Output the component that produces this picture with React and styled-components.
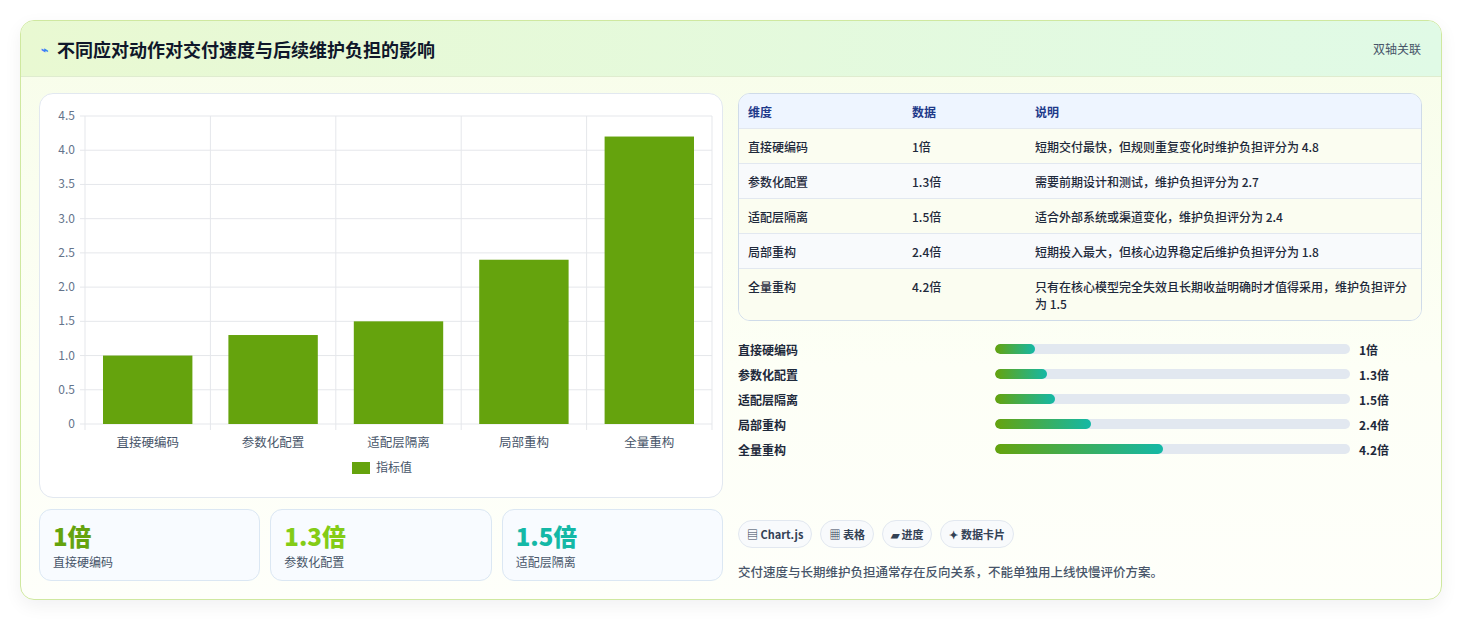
import React from "react";
import styled, { createGlobalStyle } from "styled-components";

const G = createGlobalStyle`
  body{margin:0;background:#fff;font-family:"Noto Sans CJK SC","Noto Sans",sans-serif;color:#1e293b;}
`;
const Page = styled.div`padding:20px 20px 20px 20px;`;
const Card = styled.div`
  border:1px solid #cfe8a0;border-radius:14px;overflow:hidden;
  background:linear-gradient(180deg,#f7fde9 0%,#fdfff6 60%,#fefffa 100%);
  box-shadow:0 6px 18px rgba(15,23,42,.06);
`;
const Head = styled.div`
  height:55px;display:flex;align-items:center;justify-content:space-between;padding:0 20px 0 20px;
  background:linear-gradient(90deg,#e9f9d2,#e0fae6);border-bottom:1px solid #dfeccf;
`;
const Title = styled.h1`margin:0;font-size:18px;font-weight:700;color:#0f172a;display:flex;align-items:center;gap:9px;`;
const Link = styled.span`font-size:12px;color:#475569;`;
const Body = styled.div`display:grid;grid-template-columns:684px 684px;gap:15px;padding:16px 18px 18px 18px;`;
const Col = styled.div`display:flex;flex-direction:column;gap:11px;`;
const ChartBox = styled.div`height:403px;background:#fff;border:1px solid #e2e8f0;border-radius:14px;`;
const Stats = styled.div`display:grid;grid-template-columns:repeat(3,1fr);gap:10px;`;
const Stat = styled.div`height:72px;box-sizing:border-box;border:1px solid #dbe7f3;border-radius:12px;background:#f8fbff;padding:10px 13px;`;
const Big = styled.div`font-size:24px;font-weight:800;line-height:32px;color:${p=>p.c};`;
const Small = styled.div`font-size:12px;color:#475569;margin-top:1px;`;
const Table = styled.div`border:1px solid #cfdbe9;border-radius:12px;overflow:hidden;background:#fff;`;
const Row = styled.div`display:grid;grid-template-columns:164px 123px 1fr;padding:0 9px;font-size:12px;
  min-height:34px;align-items:start;background:${p=>p.h?"#eef5ff":p.alt?"#f8fafc":"#fbfdf1"};
  color:${p=>p.h?"#1e3a8a":"#1e293b"};font-weight:${p=>p.h?600:500};
  border-bottom:${p=>p.last?"none":"1px solid #e2e8f0"};
  & > span{padding:9px 0 8px;line-height:17px;}`;
const Bars = styled.div`display:flex;flex-direction:column;gap:7px;padding-top:8px;`;
const BarRow = styled.div`display:grid;grid-template-columns:257px 355px 1fr;gap:0;align-items:center;font-size:12px;font-weight:600;height:18px;
  & > b{padding-left:9px;font-weight:700;}`;
const Track = styled.div`height:10px;border-radius:5px;background:#e2e8f0;overflow:hidden;`;
const Fill = styled.div`height:100%;border-radius:5px;background:linear-gradient(90deg,#65a30d,#14b8a6);`;
const Foot = styled.div`margin-top:auto;display:flex;flex-direction:column;gap:14px;`;
const Chips = styled.div`display:flex;gap:8px;`;
const Chip = styled.span`font-size:11px;font-weight:600;color:#334155;border:1px solid #e2e8f0;background:#f8fafc;border-radius:14px;padding:5px 8px;`;
const Note = styled.div`font-size:12.5px;color:#475569;font-weight:500;`;

const data=[["直接硬编码",1,"短期交付最快，但规则重复变化时维护负担评分为 4.8"],["参数化配置",1.3,"需要前期设计和测试，维护负担评分为 2.7"],["适配层隔离",1.5,"适合外部系统或渠道变化，维护负担评分为 2.4"],["局部重构",2.4,"短期投入最大，但核心边界稳定后维护负担评分为 1.8"],["全量重构",4.2,"只有在核心模型完全失效且长期收益明确时才值得采用，维护负担评分为 1.5"]];

function Chart(){
  const L=45,R=672,T=22,B=330,u=(B-T)/4.5,w=(R-L)/5;
  const ticks=[0,0.5,1,1.5,2,2.5,3,3.5,4,4.5];
  return <svg width="684" height="403" style={{display:"block"}} fontFamily="Noto Sans CJK SC, sans-serif">
    {ticks.map(t=><g key={t}><line x1={L-5} x2={R} y1={B-t*u} y2={B-t*u} stroke="#e5e7eb"/>
      <text x={L-10} y={B-t*u+4} fontSize="12" fill="#64748b" textAnchor="end">{t===0?"0":t.toFixed(1)}</text></g>)}
    {[0,1,2,3,4,5].map(i=><line key={i} x1={L+i*w} x2={L+i*w} y1={T} y2={B+6} stroke="#e5e7eb"/>)}
    {data.map((d,i)=><g key={i}><rect x={L+i*w+18} width={w-36} y={B-d[1]*u} height={d[1]*u} fill="#65a30d"/>
      <text x={L+i*w+w/2} y={B+23} fontSize="12.5" fill="#475569" textAnchor="middle">{d[0]}</text></g>)}
    <rect x="312" y="368" width="18" height="12" fill="#65a30d"/>
    <text x="336" y="378" fontSize="12" fill="#475569">指标值</text>
  </svg>;
}

export default function App(){
  return <Page><G/><Card>
    <Head><Title><span style={{fontSize:12,color:"#3b82f6"}}>⌁</span>不同应对动作对交付速度与后续维护负担的影响</Title><Link>双轴关联</Link></Head>
    <Body>
      <Col>
        <ChartBox><Chart/></ChartBox>
        <Stats>
          <Stat><Big c="#65a30d">1倍</Big><Small>直接硬编码</Small></Stat>
          <Stat><Big c="#84cc16">1.3倍</Big><Small>参数化配置</Small></Stat>
          <Stat><Big c="#14b8a6">1.5倍</Big><Small>适配层隔离</Small></Stat>
        </Stats>
      </Col>
      <Col>
        <Table>
          <Row h><span>维度</span><span>数据</span><span>说明</span></Row>
          {data.map((d,i)=><Row key={i} alt={i%2===1} last={i===4}><span>{d[0]}</span><span>{d[1]}倍</span><span>{d[2]}</span></Row>)}
        </Table>
        <Bars>{data.map((d,i)=><BarRow key={i}><span>{d[0]}</span><Track><Fill style={{width:`${d[1]/8.9*100}%`}}/></Track><b>{d[1]}倍</b></BarRow>)}</Bars>
        <Foot>
          <Chips><Chip>▤ Chart.js</Chip><Chip>▦ 表格</Chip><Chip>▰ 进度</Chip><Chip>✦ 数据卡片</Chip></Chips>
          <Note>交付速度与长期维护负担通常存在反向关系，不能单独用上线快慢评价方案。</Note>
        </Foot>
      </Col>
    </Body>
  </Card></Page>;
}
